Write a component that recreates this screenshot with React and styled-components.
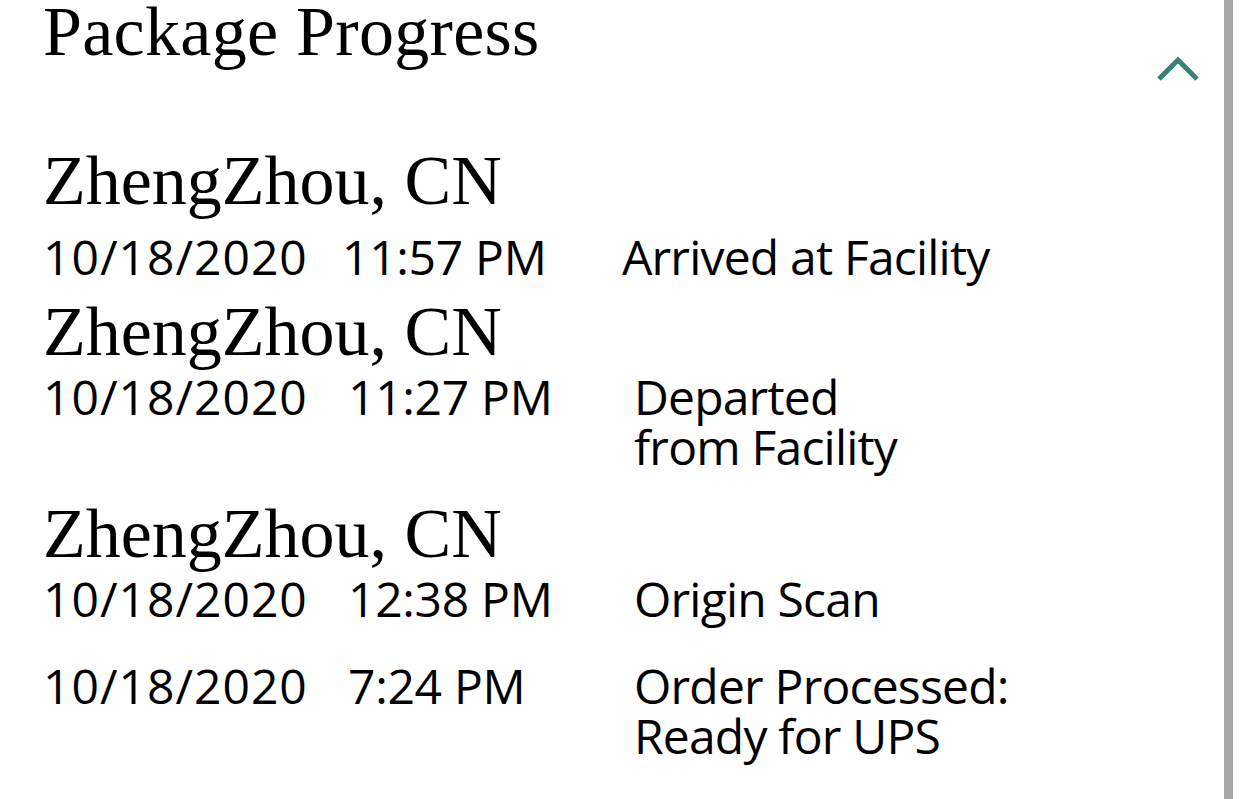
import React from "react";
import styled, { createGlobalStyle } from "styled-components";

const GlobalStyle = createGlobalStyle`
  html, body {
    margin: 0;
    padding: 0;
    background: #ffffff;
  }
  body {
    overflow: hidden;
  }
`;

const Screen = styled.div`
  display: grid;
  grid-template-columns: 1fr 9px 9px;
  width: 1242px;
  height: 799px;
  background: #ffffff;
  color: #000;
`;

const Content = styled.div`
  padding-left: 43px;
  padding-right: 24px;
`;

const ScrollTrack = styled.div`
  background: #a7a7a7;
`;

const Header = styled.div`
  display: flex;
  justify-content: space-between;
  align-items: flex-start;
  height: 88px;
`;

const Title = styled.h1`
  margin: 0;
  padding-top: 2px;
  font-family: "Liberation Serif", "DejaVu Serif", serif;
  font-weight: 400;
  font-size: 70px;
  line-height: 60px;
  letter-spacing: 0.3px;
`;

const Toggle = styled.button`
  margin-top: 55px;
  padding: 0;
  border: none;
  background: none;
  cursor: pointer;
  color: #3a8078;
  line-height: 0;
`;

const List = styled.div`
  display: flex;
  flex-direction: column;
`;

const Entry = styled.div`
  margin-top: ${(props) => props.space}px;
`;

const Location = styled.div`
  font-family: "Liberation Serif", "DejaVu Serif", serif;
  font-size: 70px;
  line-height: 64px;
  margin-bottom: ${(props) => (props.first ? 19 : 8)}px;
`;

const Row = styled.div`
  display: grid;
  grid-template-columns: ${(props) =>
    props.compact ? "299px 280px 1fr" : "305px 286px 1fr"};
  font-family: "Open Sans", "Noto Sans", sans-serif;
  font-size: 48px;
  line-height: 50px;
  letter-spacing: -0.3px;
`;

const Cell = styled.div`
  white-space: nowrap;
  letter-spacing: ${(props) => (props.wide ? "1px" : "-0.3px")};
`;

const Status = styled.div`
  white-space: pre-line;
  letter-spacing: -0.8px;
`;

const ChevronUp = () => (
  <svg width="44" height="28" viewBox="0 0 44 28" fill="none">
    <path
      d="M3 24 L22 5 L41 24"
      stroke="currentColor"
      strokeWidth="5"
      strokeLinecap="butt"
      strokeLinejoin="miter"
    />
  </svg>
);

const events = [
  {
    location: "ZhengZhou, CN",
    date: "10/18/2020",
    time: "11:57 PM",
    status: "Arrived at Facility",
    space: 61,
    compact: true,
  },
  {
    location: "ZhengZhou, CN",
    date: "10/18/2020",
    time: "11:27 PM",
    status: "Departed\nfrom Facility",
    space: 18,
  },
  {
    location: "ZhengZhou, CN",
    date: "10/18/2020",
    time: "12:38 PM",
    status: "Origin Scan",
    space: 30,
  },
  {
    date: "10/18/2020",
    time: "7:24 PM",
    status: "Order Processed:\nReady for UPS",
    space: 37,
  },
];

export default function App() {
  return (
    <>
      <GlobalStyle />
      <Screen>
        <Content>
          <Header>
            <Title>Package Progress</Title>
            <Toggle aria-label="Collapse">
              <ChevronUp />
            </Toggle>
          </Header>
          <List>
            {events.map((ev, i) => (
              <Entry key={i} space={ev.space}>
                {ev.location && (
                  <Location first={i === 0}>{ev.location}</Location>
                )}
                <Row compact={ev.compact}>
                  <Cell wide>{ev.date}</Cell>
                  <Cell>{ev.time}</Cell>
                  <Status>{ev.status}</Status>
                </Row>
              </Entry>
            ))}
          </List>
        </Content>
        <ScrollTrack />
        <div />
      </Screen>
    </>
  );
}
